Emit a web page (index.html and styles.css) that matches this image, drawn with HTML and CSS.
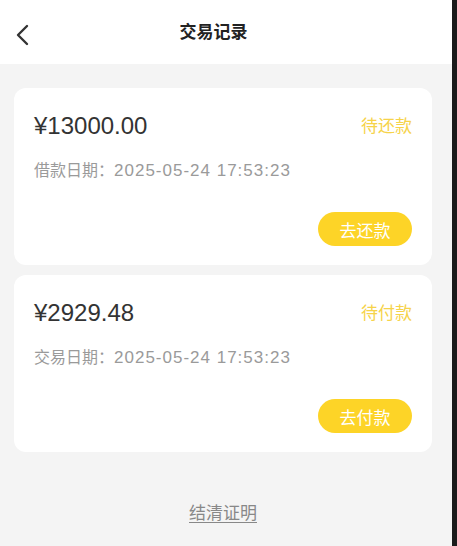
FILE: index.html
```html
<!DOCTYPE html>
<html lang="zh-CN">
<head>
<meta charset="utf-8">
<title>交易记录</title>
<link rel="stylesheet" href="styles.css">
</head>
<body>
<div class="app">
  <header class="topbar">
    <span class="back">
      <svg width="16" height="22" viewBox="0 0 16 22"><path d="M12 2 L3 11 L12 20" fill="none" stroke="#333" stroke-width="2.4" stroke-linecap="round" stroke-linejoin="round"/></svg>
    </span>
    <h1 class="title">交易记录</h1>
  </header>
  <main class="content">
    <section class="card">
      <div class="row-top">
        <span class="amount">¥13000.00</span>
        <span class="status">待还款</span>
      </div>
      <div class="date"><span class="date-label">借款日期：</span><span class="date-value">2025-05-24 17:53:23</span></div>
      <div class="row-action"><button class="btn">去还款</button></div>
    </section>
    <section class="card">
      <div class="row-top">
        <span class="amount">¥2929.48</span>
        <span class="status">待付款</span>
      </div>
      <div class="date"><span class="date-label">交易日期：</span><span class="date-value">2025-05-24 17:53:23</span></div>
      <div class="row-action"><button class="btn">去付款</button></div>
    </section>
    <div class="footer"><a class="cert">结清证明</a></div>
  </main>
</div>
</body>
</html>
```

FILE: styles.css
```css
* { box-sizing: border-box; }
html, body { margin: 0; padding: 0; }
body {
  background: #1b1b1b;
  font-family: "Liberation Sans", "Noto Sans CJK SC", sans-serif;
}
.app {
  width: 452px;
  min-height: 546px;
  background: #f4f4f4;
}
.topbar {
  height: 64px;
  background: #fff;
  display: flex;
  align-items: center;
  justify-content: center;
  position: relative;
  padding-right: 25px;
}
.back {
  position: absolute;
  left: 15px;
  top: 24px;
  display: flex;
}
.title {
  margin: 0;
  font-size: 17px;
  font-weight: bold;
  color: #222;
  line-height: 24px;
  padding-top: 2px;
}
.content {
  padding: 24px 20px 0 14px;
  display: flex;
  flex-direction: column;
  gap: 10px;
}
.card {
  background: #fff;
  border-radius: 12px;
  padding: 22px 20px 19px 20px;
}
.row-top {
  display: flex;
  justify-content: space-between;
  align-items: center;
  height: 32px;
}
.amount {
  font-size: 24px;
  color: #333;
}
.status {
  font-size: 17px;
  color: #f6d34a;
  margin-top: -3px;
}
.date {
  margin-top: 17px;
  line-height: 24px;
  font-size: 16px;
  color: #9a9a9a;
}
.date-value {
  font-size: 17px;
  letter-spacing: 1px;
}
.row-action {
  margin-top: 29px;
  display: flex;
  justify-content: flex-end;
}
.btn {
  width: 94px;
  height: 34px;
  border: none;
  border-radius: 17px;
  background: #fdd427;
  color: #fff;
  font-family: inherit;
  font-size: 17px;
  padding: 0;
}
.footer {
  margin-top: 40px;
  text-align: center;
  line-height: 24px;
}
.cert {
  font-size: 17px;
  color: #888;
  text-decoration: underline;
  text-underline-offset: 3px;
}
```
